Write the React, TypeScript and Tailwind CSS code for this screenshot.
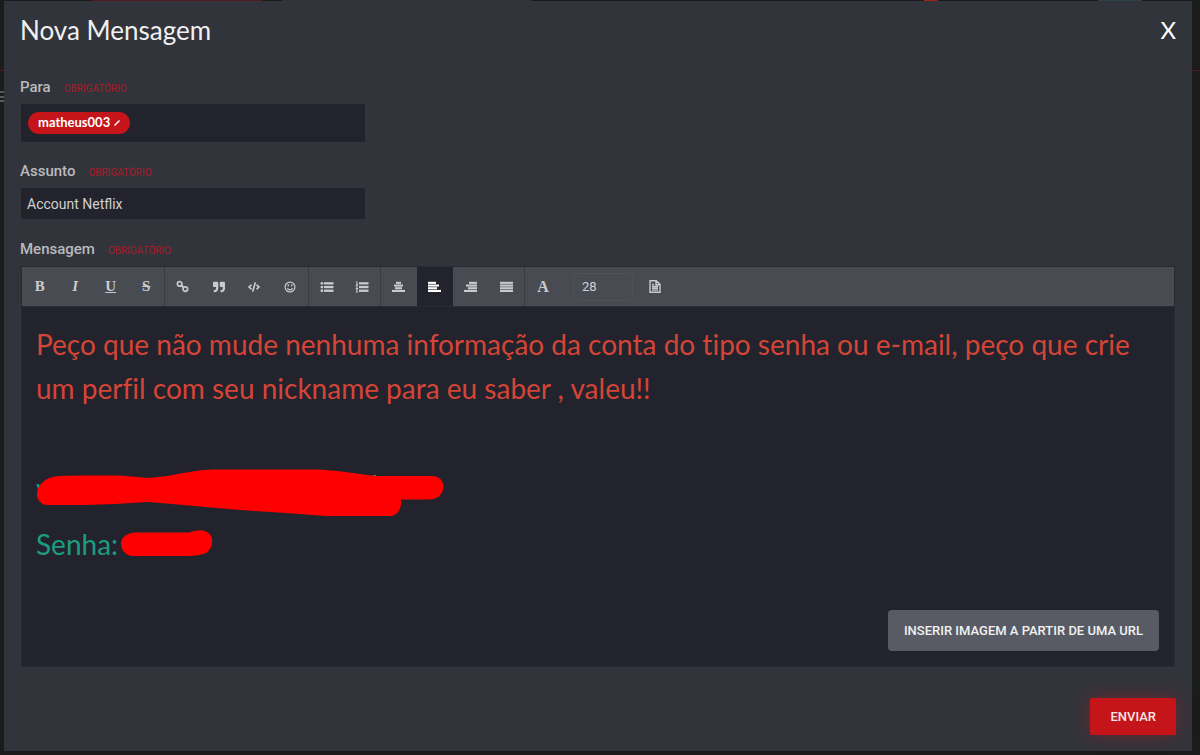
import { useState } from 'react'
import type { ReactNode } from 'react'
import { FaCode, FaQuoteRight } from 'react-icons/fa'

interface ToolProps {
  label: string
  active?: boolean
  onClick?: () => void
  children: ReactNode
}

function Tool({ label, active = false, onClick, children }: ToolProps) {
  return (
    <button
      type="button"
      aria-label={label}
      aria-pressed={active}
      onClick={onClick}
      className={
        active
          ? 'flex flex-1 items-center justify-center bg-[#22232c] text-white'
          : 'flex flex-1 items-center justify-center text-[#c9cacc] hover:text-white'
      }
    >
      {children}
    </button>
  )
}

// Four bars, each given as [x, width] on a 13px grid
function Bars({ rows }: { rows: number[][] }) {
  return (
    <svg width="13" height="12" viewBox="0 0 13 12" fill="currentColor" aria-hidden="true">
      {rows.map(([x, w], i) => (
        <rect key={i} x={x} y={0.8 + i * 2.7} width={w} height="2.1" />
      ))}
    </svg>
  )
}

function ListIcon({ ordered = false }: { ordered?: boolean }) {
  return (
    <svg width="14" height="12" viewBox="0 0 14 12" fill="currentColor" aria-hidden="true">
      {[1.2, 4.9, 8.6].map((y) => (
        <g key={y}>
          <rect x="4" y={y} width="9.5" height="2.3" />
          {ordered ? (
            <path d={`M.8 ${y - 0.8}h1.700v3h.7v.8H.8v-.8h.6V${y}H.8z`} />
          ) : (
            <circle cx="1.9" cy={y + 1.15} r="1.4" />
          )}
        </g>
      ))}
    </svg>
  )
}

function LinkIcon() {
  return (
    <svg width="13" height="13" viewBox="0 0 13 13" fill="none" stroke="currentColor" strokeWidth="1.7" aria-hidden="true">
      <circle cx="3.700" cy="3.900" r="2.3" />
      <circle cx="9.300" cy="9.100" r="2.3" />
      <path d="M4.800 5l3.400 3" strokeWidth="1.9" />
    </svg>
  )
}

function SmileIcon() {
  return (
    <svg width="12" height="12" viewBox="0 0 12 12" fill="none" stroke="currentColor" strokeWidth="1.2" aria-hidden="true">
      <circle cx="6" cy="6" r="4.9" />
      <path d="M3.400 7.300c.9 2 4.300 2 5.200 0" />
      <path d="M4.300 3.500v1.700M7.700 3.500v1.700" strokeWidth="1.5" />
    </svg>
  )
}

const alignments = [
  { id: 'center', label: 'Centralizar', rows: [[4, 5], [2, 9], [3, 7], [0, 13]] },
  { id: 'left', label: 'Alinhar à esquerda', rows: [[0, 8], [0, 11], [0, 9], [0, 13]] },
  { id: 'right', label: 'Alinhar à direita', rows: [[5, 8], [2, 11], [4, 9], [0, 13]] },
  { id: 'justify', label: 'Justificar', rows: [[0, 13], [0, 13], [0, 13], [0, 13]] },
]

function FieldLabel({ htmlFor, children }: { htmlFor: string; children: ReactNode }) {
  return (
    <label htmlFor={htmlFor} className="flex items-baseline gap-[13px] text-[15px] leading-5 font-medium text-[#b9babd]">
      {children}
      <span className="text-[10px] font-normal text-[#a71d26]">OBRIGATÓRIO</span>
    </label>
  )
}

export default function App() {
  const [align, setAlign] = useState('left')
  const [subject, setSubject] = useState('Account Netflix')
  const [recipients, setRecipients] = useState(['matheus003'])

  return (
    <div className="relative min-h-screen bg-[#1b1b1c] pt-px pr-2 pb-1 pl-1 font-[Roboto,sans-serif]">
      {/* Dimmed page edges around the dialog */}
      <div aria-hidden="true">
        <div className="absolute top-0 left-[92px] h-px w-[170px] bg-[#551a1e]" />
        <div className="absolute top-0 left-[282px] h-px w-[250px] bg-[#303132]" />
        <div className="absolute top-0 left-[924px] h-px w-3.5 bg-[#a0221c]" />
        <div className="absolute top-0 left-[1098px] h-px w-11 bg-[#2b4149]" />
        <div className="absolute top-[70px] left-0 h-px w-full bg-[#551a1e]" />
        <div className="absolute top-[91px] left-0 h-[11px] w-1 border-y-2 border-[#5a5a5c]" />
        <div className="absolute top-24 left-0 h-0.5 w-1 bg-[#5a5a5c]" />
      </div>

      <form
        role="dialog"
        aria-labelledby="dialog-title"
        onSubmit={(e) => e.preventDefault()}
        className="relative flex min-h-[750px] flex-col bg-[#32343b] px-4 pb-4"
      >
        <header className="flex h-[58px] items-center justify-between border-b border-[#2f3137] font-[Lato,sans-serif]">
          <h1 id="dialog-title" className="text-[26px] leading-8 text-[#f0f0f1]">
            Nova Mensagem
          </h1>
          <button type="button" aria-label="Fechar" className="text-2xl leading-8 text-white">X</button>
        </header>

        <div className="mt-[18px]">
          <FieldLabel htmlFor="to">Para</FieldLabel>
          <div className="mt-[5px] ml-px flex h-[38px] w-full max-w-[344px] items-center gap-2 bg-[#22232c] px-[7px]">
            {recipients.map((name) => (
              <span
                key={name}
                className="flex h-[22px] items-center gap-1 rounded-full bg-[#c5151b] px-2.5 font-[Lato,sans-serif] text-[13px] font-bold text-white"
              >
                {name}
                <button
                  type="button"
                  aria-label={`Remover ${name}`}
                  onClick={() => setRecipients(recipients.filter((r) => r !== name))}
                >
                  <svg width="6" height="6" viewBox="0 0 6 6" stroke="currentColor" strokeWidth="1.4">
                    <path d="M.5 5.5l5-5" />
                  </svg>
                </button>
              </span>
            ))}
            <input id="to" className="min-w-0 flex-1 bg-transparent text-sm text-[#d0d0d2] outline-none" />
          </div>
        </div>

        <div className="mt-[19px]">
          <FieldLabel htmlFor="subject">Assunto</FieldLabel>
          <input
            id="subject"
            value={subject}
            onChange={(e) => setSubject(e.target.value)}
            className="mt-[5px] ml-px block h-[31px] w-full max-w-[344px] bg-[#22232c] px-[6px] text-sm text-[#d0d0d2] outline-none"
          />
        </div>

        <div className="mt-5 flex flex-1 flex-col">
          <FieldLabel htmlFor="message">Mensagem</FieldLabel>
          <div className="mt-[5px] mr-px ml-px flex flex-1 flex-col border border-[#2a2b32] bg-[#22232c]">
            <div role="toolbar" className="flex h-10 border-b border-[#2a2b32] bg-[#494b52] text-[11px]">
              <div className="flex w-[143px] border-r border-[#3a3c42] font-['Liberation_Serif',serif] text-[15px] font-bold">
                <Tool label="Negrito">B</Tool>
                <Tool label="Itálico"><span className="italic">I</span></Tool>
                <Tool label="Sublinhado"><span className="underline">U</span></Tool>
                <Tool label="Tachado"><span className="line-through">S</span></Tool>
              </div>
              <div className="flex w-36 border-r border-[#3a3c42]">
                <Tool label="Link"><LinkIcon /></Tool>
                <Tool label="Citação"><FaQuoteRight className="text-xs" /></Tool>
                <Tool label="Código"><FaCode className="text-xs" /></Tool>
                <Tool label="Emoticons"><SmileIcon /></Tool>
              </div>
              <div className="flex w-[72px] border-r border-[#3a3c42]">
                <Tool label="Lista"><ListIcon /></Tool>
                <Tool label="Lista numerada"><ListIcon ordered /></Tool>
              </div>
              <div className="flex w-36 border-r border-[#3a3c42]">
                {alignments.map((a) => (
                  <Tool key={a.id} label={a.label} active={align === a.id} onClick={() => setAlign(a.id)}>
                    <Bars rows={a.rows} />
                  </Tool>
                ))}
              </div>
              <div className="flex items-center">
                <div className="flex h-full w-9 font-['Liberation_Serif',serif] text-base font-bold">
                  <Tool label="Cor da fonte">A</Tool>
                </div>
                <select
                  aria-label="Tamanho da fonte"
                  defaultValue="28"
                  className="mx-3 h-7 w-[60px] appearance-none rounded-sm border border-[#515259] px-2 text-[13px] text-[#d0d0d2]"
                >
                  <option>14</option>
                  <option>18</option>
                  <option>28</option>
                </select>
                <button type="button" aria-label="Modelos" className="ml-1 text-[#c9cacc]">
                  <svg width="12" height="13" viewBox="0 0 12 13" fill="none" stroke="currentColor" strokeWidth="1.4" aria-hidden="true">
                    <path d="M1 .8h6.2L11 4.400V12.200H1zM7 1v3.700h4M3 6.500h6M3 8.300h6M3 10.100h6M3 4.500h2" />
                  </svg>
                </button>
              </div>
            </div>

            <div
              id="message"
              role="textbox"
              aria-multiline="true"
              contentEditable
              suppressContentEditableWarning
              className="flex-1 px-[14px] pt-[15px] font-[Lato,sans-serif] text-[28px] leading-[44px] [font-variant-ligatures:none] outline-none"
            >
              <p className="text-[#d44537]">
                Peço que não mude nenhuma informação da conta do tipo senha ou e-mail, peço que crie um perfil com seu
                nickname para eu saber , valeu!!
              </p>
              <p className="relative mt-14 text-[#1b9d80]">
                vl
                <svg className="absolute -top-2 left-0" width="410" height="60" viewBox="36 458 410 60" aria-hidden="true">
                  <path fill="currentColor" d="M373 475h3v3h-3z" />
                  <path
                    fill="#f00"
                    d="M37 494C37 486 44 477 59 476L80 475.500H120L149 478C176 476 190 470 214 469.500H314C338 470 358 474 376 476H430C448 474 448 499 430 499.500H401C402 509 397 516 390 516H326L286 513L240 510L149 502L115 504L85 505H48C41 505 37 500 37 494Z"
                  />
                </svg>
              </p>
              <p className="mt-3 flex items-center gap-0.5 text-[#1b9d80]">
                Senha:
                <svg width="92" height="28" viewBox="121 531 92 28" aria-hidden="true">
                  <path
                    fill="#f00"
                    d="M122 545C122 538 128 534 137 533.500H190C196 532 200 531 204 531.500C216 534 216 548 207 554Q200 557 190 557H148L134 557C127 557 122 551 122 545Z"
                  />
                </svg>
              </p>
            </div>

            <div className="flex justify-end px-[15px] pb-[15px]">
              <button
                type="button"
                className="h-[41px] rounded-sm bg-[#595b64] px-4 text-[13px] font-medium text-[#f1f1f2]"
              >
                INSERIR IMAGEM A PARTIR DE UMA URL
              </button>
            </div>
          </div>
        </div>

        <div className="mt-[31px] flex justify-end">
          <button
            type="submit"
            className="h-[37px] rounded-xs bg-[#c5151b] px-5 text-[13px] font-medium text-[#f6e6e7] shadow-[0_0_18px_rgba(197,21,27,0.4)]"
          >
            ENVIAR
          </button>
        </div>
      </form>
    </div>
  )
}
